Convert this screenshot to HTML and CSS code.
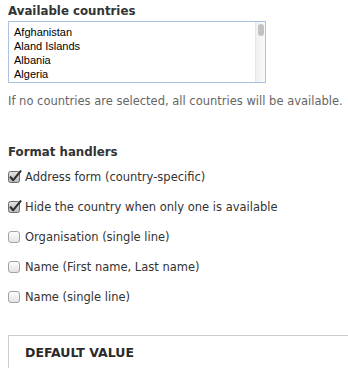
FILE: index.html
```html
<!DOCTYPE html>
<html lang="en">
<head>
<meta charset="utf-8">
<title>Address field settings</title>
<link rel="stylesheet" href="styles.css">
</head>
<body>
<div class="form-item">
  <div class="label">Available countries</div>
  <div class="listbox">
    <div class="options">
      <div class="option">Afghanistan</div>
      <div class="option">Aland Islands</div>
      <div class="option">Albania</div>
      <div class="option">Algeria</div>
    </div>
    <div class="scrollbar"><div class="thumb"></div></div>
  </div>
  <div class="description">If no countries are selected, all countries will be available.</div>
</div>

<div class="form-item handlers">
  <div class="label">Format handlers</div>
  <div class="checks">
    <div class="check">
      <svg class="box" width="14" height="14" viewBox="0 0 14 14"><defs><linearGradient id="gc" x1="0" y1="0" x2="0" y2="1"><stop offset="0" stop-color="#e4e4e4"/><stop offset="1" stop-color="#b9b9b9"/></linearGradient></defs><rect x="0.5" y="1.5" width="11" height="11" rx="2" fill="url(#gc)" stroke="#6e6e6e"/><path d="M2.6 7.2 L5.2 10.2 L12.6 1.2" fill="none" stroke="#2f2f2f" stroke-width="2.1" stroke-linecap="round" stroke-linejoin="round"/></svg>
      <span>Address form (country-specific)</span>
    </div>
    <div class="check">
      <svg class="box" width="14" height="14" viewBox="0 0 14 14"><rect x="0.5" y="1.5" width="11" height="11" rx="2" fill="url(#gc)" stroke="#6e6e6e"/><path d="M2.6 7.2 L5.2 10.2 L12.6 1.2" fill="none" stroke="#2f2f2f" stroke-width="2.1" stroke-linecap="round" stroke-linejoin="round"/></svg>
      <span>Hide the country when only one is available</span>
    </div>
    <div class="check">
      <svg class="box" width="14" height="14" viewBox="0 0 14 14"><defs><linearGradient id="gu" x1="0" y1="0" x2="0" y2="1"><stop offset="0" stop-color="#ffffff"/><stop offset="1" stop-color="#e2e2e2"/></linearGradient></defs><rect x="0.5" y="1.5" width="11" height="11" rx="2.5" fill="url(#gu)" stroke="#a3a3a3"/></svg>
      <span>Organisation (single line)</span>
    </div>
    <div class="check">
      <svg class="box" width="14" height="14" viewBox="0 0 14 14"><rect x="0.5" y="1.5" width="11" height="11" rx="2.5" fill="url(#gu)" stroke="#a3a3a3"/></svg>
      <span>Name (First name, Last name)</span>
    </div>
    <div class="check">
      <svg class="box" width="14" height="14" viewBox="0 0 14 14"><rect x="0.5" y="1.5" width="11" height="11" rx="2.5" fill="url(#gu)" stroke="#a3a3a3"/></svg>
      <span>Name (single line)</span>
    </div>
  </div>
</div>

<div class="fieldset">
  <div class="legend">Default value</div>
</div>
</body>
</html>
```
FILE: styles.css
```css
html, body {
  margin: 0;
  padding: 0;
  background: #fff;
  overflow: hidden;
}
body {
  padding-left: 8px;
  font-family: "DejaVu Sans", Verdana, sans-serif;
  color: #333;
  font-size: 11.5px;
}
.label {
  font-weight: bold;
  font-size: 11.8px;
  line-height: 15px;
  color: #333;
}
.form-item:first-child .label {
  margin-top: 4px;
}
.listbox {
  margin-top: 2px;
  width: 256px;
  height: 60px;
  border: 1px solid #a9c4e2;
  display: flex;
  background: #fff;
}
.options {
  flex: 1;
  padding: 3px 0 0 5px;
  font-family: "Liberation Sans", Arial, sans-serif;
  font-size: 11px;
  line-height: 14px;
  color: #000;
}
.scrollbar {
  width: 10px;
  border-left: 1px solid #e6e6e6;
  background: linear-gradient(to right, #f0f0f0, #fafafa);
  padding: 2px 0 0 2px;
  box-sizing: border-box;
}
.thumb {
  width: 6px;
  height: 12px;
  border-radius: 3px;
  background: #c2c2c2;
}
.description {
  margin-top: 10px;
  line-height: 16px;
  color: #666;
}
.handlers {
  margin-top: 35px;
}
.handlers .label {
  line-height: 16px;
}
.checks {
  margin-top: 9px;
  display: flex;
  flex-direction: column;
  gap: 14px;
}
.check {
  display: flex;
  align-items: center;
  gap: 3px;
  line-height: 16px;
}
.box {
  flex: none;
  display: block;
}
.fieldset {
  margin-top: 30px;
  border-top: 1px solid #cccccc;
  border-left: 1px solid #cccccc;
  height: 40px;
  padding: 9px 0 0 16px;
}
.legend {
  font-weight: bold;
  text-transform: uppercase;
  font-size: 12.5px;
  line-height: 16px;
  color: #2a2a2a;
}
```
